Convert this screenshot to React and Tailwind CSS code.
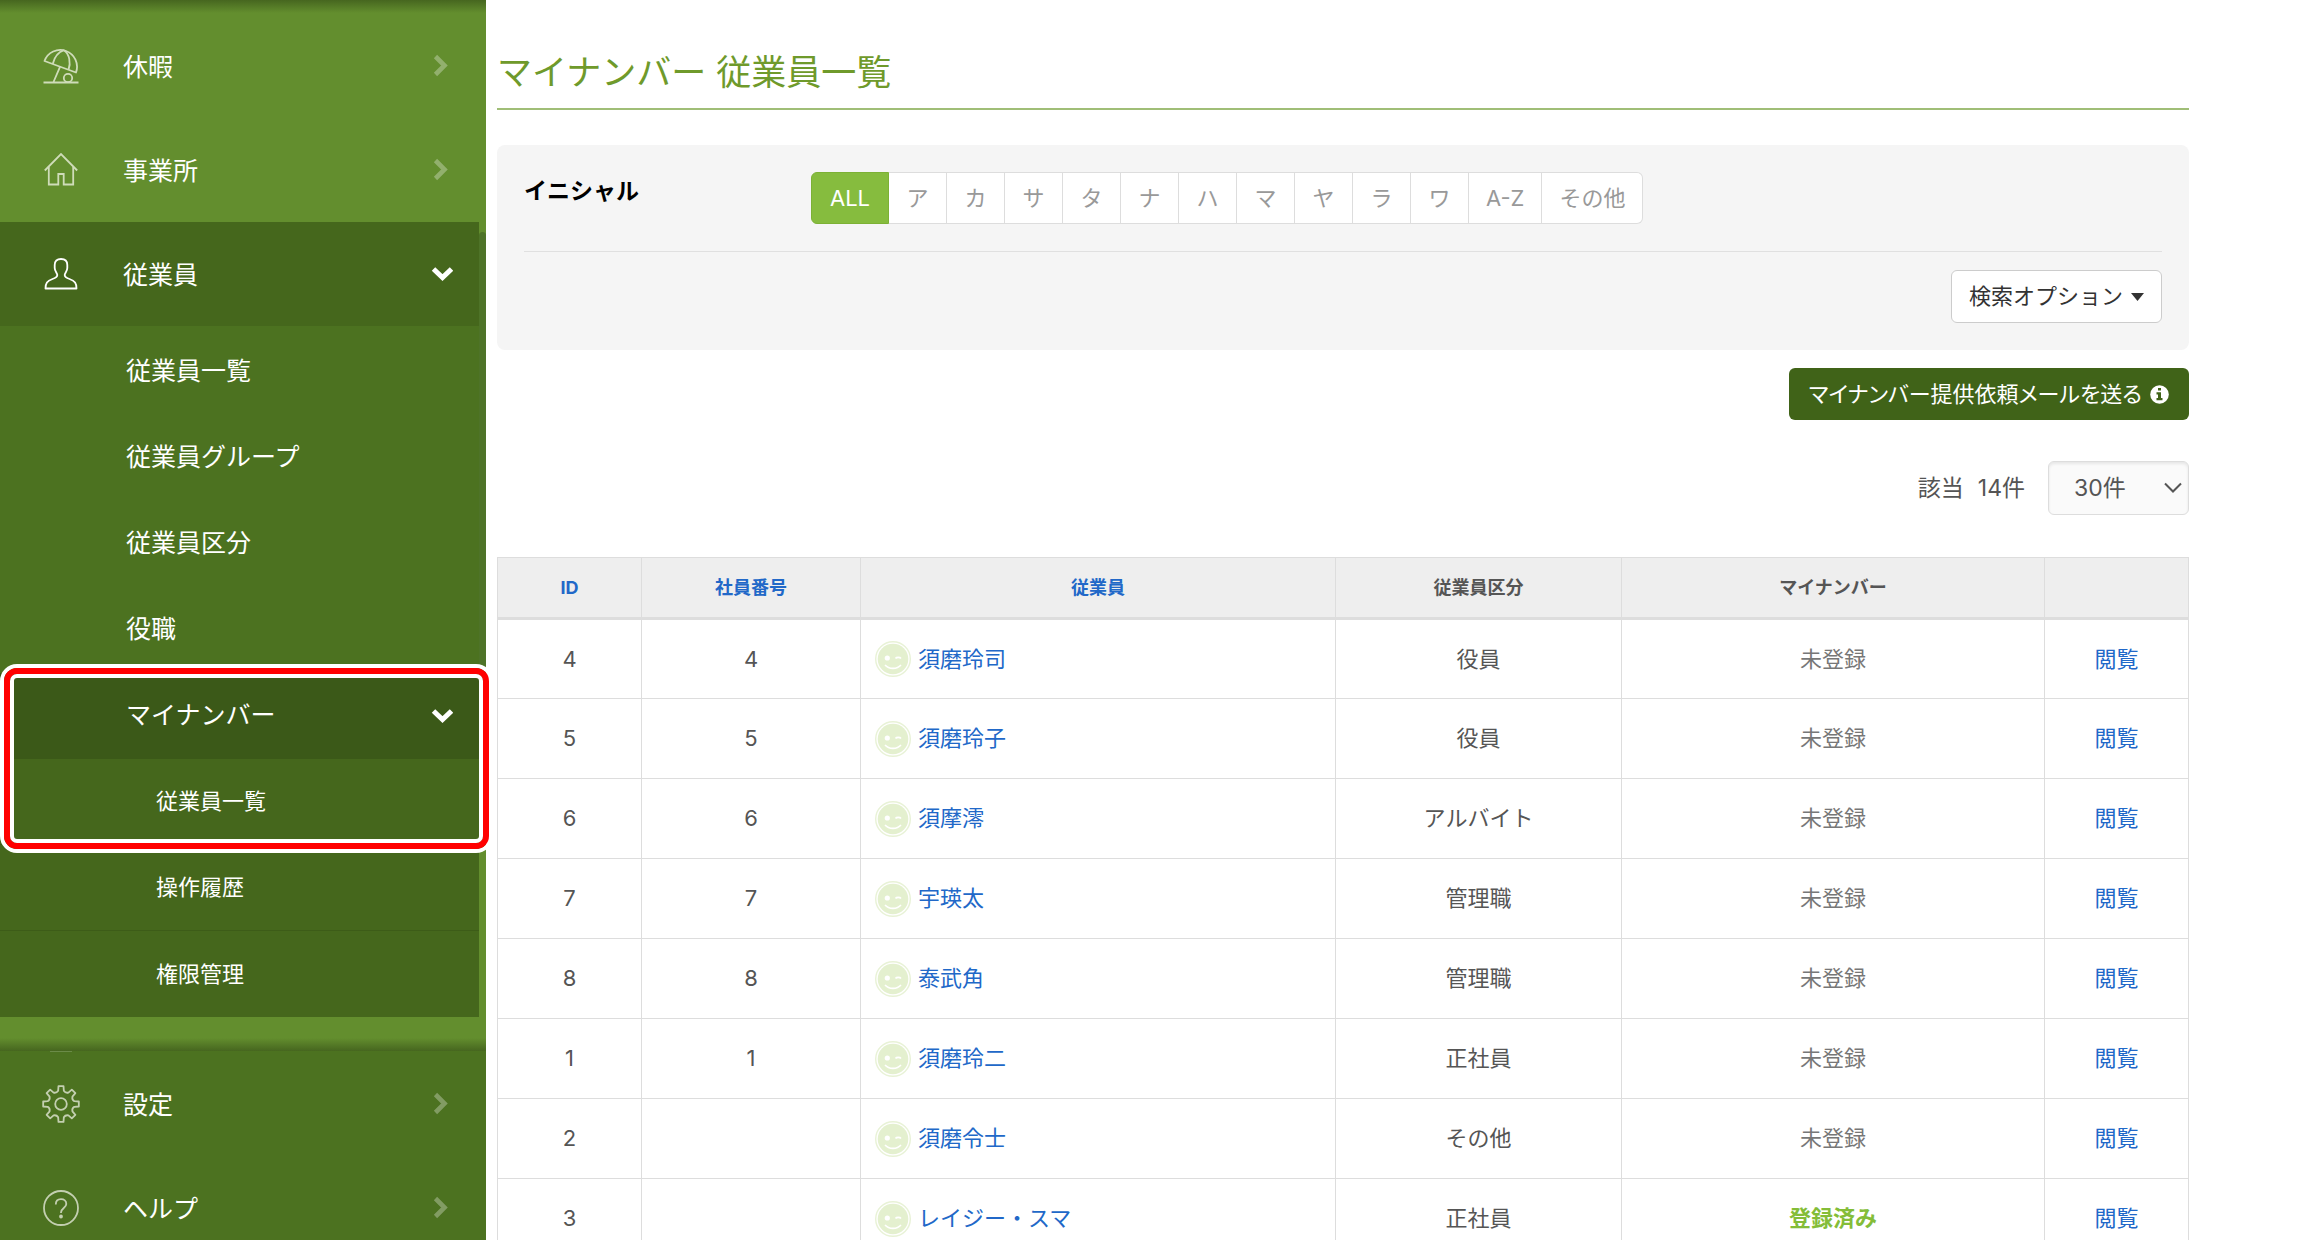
// src/pages/mynumber/EmployeeList.jsx
import React from 'react';

const initials = ['ALL', 'ア', 'カ', 'サ', 'タ', 'ナ', 'ハ', 'マ', 'ヤ', 'ラ', 'ワ', 'A-Z', 'その他'];

const employees = [
  { id: 4, code: '4', name: '須磨玲司', type: '役員', registered: false },
  { id: 5, code: '5', name: '須磨玲子', type: '役員', registered: false },
  { id: 6, code: '6', name: '須摩澪', type: 'アルバイト', registered: false },
  { id: 7, code: '7', name: '宇瑛太', type: '管理職', registered: false },
  { id: 8, code: '8', name: '泰武角', type: '管理職', registered: false },
  { id: 1, code: '1', name: '須磨玲二', type: '正社員', registered: false },
  { id: 2, code: '', name: '須磨令士', type: 'その他', registered: false },
  { id: 3, code: '', name: 'レイジー・スマ', type: '正社員', registered: true },
];

// 8 teeth around the centre of a 38px box
const gearPath = () => {
  const point = (r, deg) => {
    const rad = (deg * Math.PI) / 180;
    return `${(19 + r * Math.cos(rad)).toFixed(2)} ${(19 + r * Math.sin(rad)).toFixed(2)}`;
  };
  let d = '';
  for (let i = 0; i < 8; i++) {
    const a = i * 45;
    d += `${i === 0 ? 'M' : 'L'}${point(13.6, a - 12)} L${point(18, a - 8)} L${point(18, a + 8)} L${point(13.6, a + 12)} Q${point(11.6, a + 22.5)} ${point(13.6, a + 33)} `;
  }
  return `${d}Z`;
};

const Icon = ({ size = 36, className = '', children }) => (
  <svg
    width={size}
    height={size}
    viewBox={`0 0 ${size} ${size}`}
    fill="none"
    stroke="currentColor"
    strokeWidth="1.8"
    className={`shrink-0 ${className}`}
    aria-hidden="true"
  >
    {children}
  </svg>
);

const UmbrellaIcon = () => (
  <Icon className="text-[#cfdcb9]">
    <path d="M1.500 13A16 16 0 0 1 33 24.500Z" strokeLinejoin="round" />
    <path d="M21 2.200C15.500 4 11.500 9 9.700 16M21 2.200C26.500 6 28 15 25.500 21.800" />
    <path d="M17 18.800L10.500 34M.5 34.500H35.500" />
    <circle cx="25" cy="30" r="4.200" />
  </Icon>
);

const HouseIcon = () => (
  <Icon className="text-[#cfdcb9]">
    <path d="M1.800 18.500L18 2L34.200 18.500" />
    <path d="M5.800 15V32.500H15.300V22H20.700V32.500H30.200V15" />
  </Icon>
);

const PersonIcon = () => (
  <Icon className="text-white">
    <path d="M2.500 32.500C2.500 27 4 25 9.500 23C13 21.800 14.300 21 14.300 19C14.300 17 11.700 15.500 11.700 12V9C11.700 5 14 3 18 3S24.300 5 24.300 9V12C24.300 15.500 21.700 17 21.700 19C21.700 21 23 21.800 26.500 23C32 25 33.500 27 33.500 32.500Z" strokeLinejoin="round" />
  </Icon>
);

const GearIcon = () => (
  <Icon size={38} className="-mx-px text-[#c3cfb0]">
    <path d={gearPath()} strokeLinejoin="round" />
    <circle cx="19" cy="19" r="5.800" />
  </Icon>
);

const HelpIcon = () => (
  <Icon className="text-[#c3cfb0]">
    <circle cx="18" cy="18" r="17" />
    <path d="M12.800 14.500C12.800 11 15 9.200 18 9.200S23.300 11 23.300 14C23.300 18 18 18 18 22.500V23" />
    <circle cx="18" cy="26.500" r="1" fill="currentColor" />
  </Icon>
);

const ChevronRight = () => (
  <svg width="24" height="24" viewBox="0 0 24 24" fill="none" stroke="currentColor" strokeWidth="4.600" className="text-white/30" aria-hidden="true">
    <path d="M6.500 2.500L15.500 11.500L6.500 20.500" />
  </svg>
);

const ChevronDown = () => (
  <svg width="24" height="24" viewBox="0 0 24 24" fill="none" stroke="currentColor" strokeWidth="5" className="text-white" aria-hidden="true">
    <path d="M4.500 7L13.500 15.500L22.500 7" />
  </svg>
);

const MenuItem = ({ icon, label, active = false }) => (
  <a
    href="#"
    className={`flex h-[104px] items-center pl-[43px] pr-[26px] text-[25px] text-white ${active ? 'bg-[#45671c]' : ''}`}
  >
    {icon}
    <span className="ml-[44px] flex-1 pt-[3px]">{label}</span>
    {active ? <ChevronDown /> : <ChevronRight />}
  </a>
);

const SubItem = ({ label }) => (
  <a href="#" className="flex h-[86px] items-center pl-[126px] text-[25px] text-white">
    {label}
  </a>
);

const Avatar = () => (
  <svg width="36" height="36" viewBox="0 0 36 36" fill="none" className="shrink-0" aria-hidden="true">
    <circle cx="18" cy="18" r="17.300" stroke="#e8f2d6" strokeWidth="1.400" />
    <circle cx="18" cy="18" r="15.300" fill="#e4f0cf" />
    <circle cx="12.300" cy="17" r="2.600" fill="#fff" />
    <path d="M20.500 17.500C21.500 16 25 16 26 17.500M10 24C14 28.500 22 28.500 26 24" stroke="#fff" strokeWidth="1.600" />
  </svg>
);

const Sidebar = () => (
  <aside className="relative z-10 flex h-screen w-[486px] shrink-0 flex-col bg-[#638e2e]">
    <nav className="relative min-h-0 flex-1 overflow-hidden pr-[7px] pt-[14px]">
      <MenuItem icon={<UmbrellaIcon />} label="休暇" />
      <MenuItem icon={<HouseIcon />} label="事業所" />
      <MenuItem icon={<PersonIcon />} label="従業員" active />
      <div className="bg-[#4c7220] pt-[3px]">
        <SubItem label="従業員一覧" />
        <SubItem label="従業員グループ" />
        <SubItem label="従業員区分" />
        <SubItem label="役職" />
        <a href="#" className="flex h-[86px] items-center justify-between bg-[#3b5918] pl-[126px] pr-[26px] text-[25px] text-white">
          マイナンバー
          <ChevronDown />
        </a>
      </div>
      <div className="divide-y divide-[#3d5c18] bg-[#45671c] text-[22px] text-white">
        <a href="#" className="flex h-[86px] items-center pl-[156px]">従業員一覧</a>
        <a href="#" className="flex h-[86px] items-center pl-[156px]">操作履歴</a>
        <a href="#" className="flex h-[86px] items-center pl-[156px]">権限管理</a>
      </div>

      {/* scroll thumb and edge shadows */}
      <div className="absolute right-0 top-[232px] h-[618px] w-[7px] rounded-full bg-[#4e7328]" />
      <div className="absolute inset-x-0 top-0 h-[13px] bg-linear-to-b from-[#46661f] to-transparent" />
      <div className="absolute inset-x-0 bottom-0 h-[13px] bg-linear-to-t from-[#46661f] to-transparent" />
    </nav>

    <nav className="h-[189px] shrink-0 overflow-hidden bg-[#4c7220] pr-[7px]">
      <div className="ml-[50px] h-px w-[22px] bg-[#6b8b48]" />
      <MenuItem icon={<GearIcon />} label="設定" />
      <MenuItem icon={<HelpIcon />} label="ヘルプ" />
    </nav>

    <div className="pointer-events-none absolute left-0 top-[664px] h-[189px] w-[493px] rounded-[17px] border-4 border-white">
      <div className="h-full rounded-[13px] border-[6px] border-[#ff0000]">
        <div className="h-full rounded-[7px] border-4 border-white" />
      </div>
    </div>
  </aside>
);

const FilterPanel = () => (
  <section className="mt-[35px] rounded-lg bg-[#f5f5f5] px-[27px] pb-[27px] pt-[27px]">
    <div className="flex items-start border-b border-[#e0e0e0] pb-[27px]">
      <h2 className="w-[287px] text-[23px] font-bold leading-[38px] text-black">イニシャル</h2>
      <div className="flex">
        {initials.map((label, i) => (
          <button
            key={label}
            type="button"
            className={`h-[52px] border-y border-r text-[22px] first:rounded-l-md first:border-l last:rounded-r-md ${
              i === 0 ? 'border-[#7cb135] bg-[#86bc3e] px-[18px] text-white' : 'min-w-[58px] border-[#dddddd] bg-white px-[17px] text-[#999999]'
            }`}
          >
            {label}
          </button>
        ))}
      </div>
    </div>
    <div className="mt-[18px] flex justify-end">
      <button type="button" className="flex h-[53px] items-center gap-2 rounded-md border border-[#cccccc] bg-white px-[17px] text-[22px] text-[#333333]">
        検索オプション
        <svg width="13" height="8" viewBox="0 0 13 8" fill="currentColor" aria-hidden="true">
          <path d="M0 0H13L6.500 8Z" />
        </svg>
      </button>
    </div>
  </section>
);

const EmployeeTable = () => (
  <table className="mt-[42px] w-full table-fixed border-collapse text-center text-[22px] text-[#555555]">
    <colgroup>
      <col className="w-[144px]" />
      <col className="w-[219px]" />
      <col />
      <col className="w-[286px]" />
      <col className="w-[423px]" />
      <col className="w-[144px]" />
    </colgroup>
    <thead>
      <tr className="h-[61px] border-b-[3px] border-[#dddddd] bg-[#eeeeee] text-[18px]">
        <th className="border-x border-t border-[#dddddd]"><a href="#" className="text-[#2168c8]">ID</a></th>
        <th className="border-x border-t border-[#dddddd]"><a href="#" className="text-[#2168c8]">社員番号</a></th>
        <th className="border-x border-t border-[#dddddd]"><a href="#" className="text-[#2168c8]">従業員</a></th>
        <th className="border-x border-t border-[#dddddd]">従業員区分</th>
        <th className="border-x border-t border-[#dddddd]">マイナンバー</th>
        <th className="border-x border-t border-[#dddddd]" />
      </tr>
    </thead>
    <tbody>
      {employees.map((employee) => (
        <tr key={employee.id} className="h-[80px]">
          <td className="border border-[#dddddd]">{employee.id}</td>
          <td className="border border-[#dddddd]">{employee.code}</td>
          <td className="border border-[#dddddd] pl-[14px]">
            <a href="#" className="flex items-center gap-[7px] text-[#2168c8]">
              <Avatar />
              {employee.name}
            </a>
          </td>
          <td className="border border-[#dddddd]">{employee.type}</td>
          <td className="border border-[#dddddd]">
            {employee.registered ? (
              <span className="font-bold text-[#84bd38]">登録済み</span>
            ) : (
              <span className="text-[#777777]">未登録</span>
            )}
          </td>
          <td className="border border-[#dddddd]"><a href="#" className="text-[#2168c8]">閲覧</a></td>
        </tr>
      ))}
    </tbody>
  </table>
);

const App = () => {
  return (
    <div className="flex h-screen overflow-hidden bg-white font-['Inter','Noto_Sans_CJK_JP',sans-serif]">
      <Sidebar />
      <main className="min-w-0 flex-1 overflow-hidden pl-[11px] pr-[111px]">
        <h1 className="border-b-2 border-[#a0be77] pb-[10px] pt-[47px] text-[35px] leading-[51px] text-[#6f9a2b]">
          マイナンバー 従業員一覧
        </h1>

        <FilterPanel />

        <div className="mt-[18px] flex justify-end">
          <button type="button" className="flex h-[52px] items-center gap-2 rounded-md bg-[#406318] px-[20px] text-[22px] text-white [font-feature-settings:'palt']">
            マイナンバー提供依頼メールを送る
            <svg width="19" height="19" viewBox="0 0 19 19" aria-hidden="true">
              <circle cx="9.500" cy="9.500" r="9.300" fill="#fff" />
              <path d="M8 3H11V5.600H8ZM6.500 7.200H11V13H12.500V15.200H6.500V13H8V9.400H6.500Z" fill="#406318" />
            </svg>
          </button>
        </div>

        <div className="mt-[41px] flex items-center justify-end text-[23px] text-[#555555]">
          <label htmlFor="per-page" className="flex gap-[14px]">
            <span>該当</span>
            <span>14件</span>
          </label>
          <div className="relative ml-[23px]">
            <select
              id="per-page"
              className="h-[54px] w-[141px] appearance-none rounded-md border border-[#dddddd] bg-[#fafafa] pl-[25px] shadow-[inset_0_2px_3px_rgba(0,0,0,0.08)]"
            >
              <option>30件</option>
              <option>50件</option>
              <option>100件</option>
            </select>
            <svg width="18" height="12" viewBox="0 0 18 12" fill="none" stroke="#555" strokeWidth="2" className="pointer-events-none absolute right-[7px] top-[21px]" aria-hidden="true">
              <path d="M1 1.500L9 9.500L17 1.500" />
            </svg>
          </div>
        </div>

        <EmployeeTable />
      </main>
    </div>
  );
};

export default App;
